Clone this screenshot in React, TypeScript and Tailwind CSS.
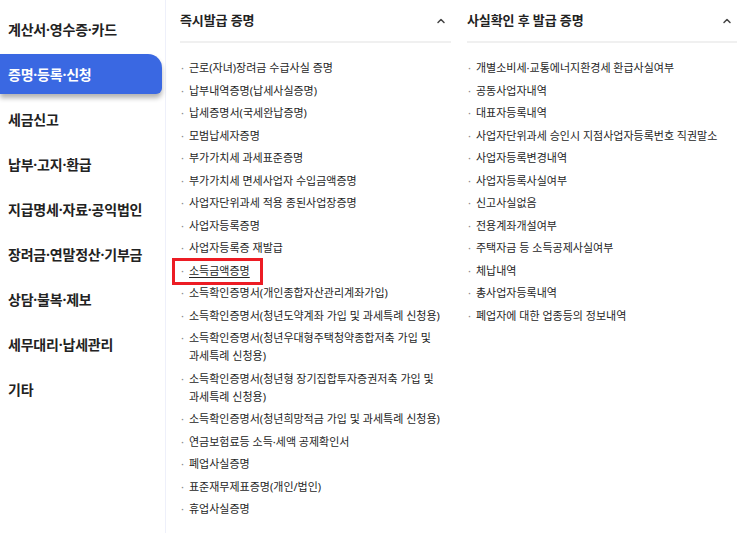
import { ChevronUp } from "lucide-react"

const menus = [
  "계산서·영수증·카드",
  "증명·등록·신청",
  "세금신고",
  "납부·고지·환급",
  "지급명세·자료·공익법인",
  "장려금·연말정산·기부금",
  "상담·불복·제보",
  "세무대리·납세관리",
  "기타"
]

const instant = [
  "근로(자녀)장려금 수급사실 증명",
  "납부내역증명(납세사실증명)",
  "납세증명서(국세완납증명)",
  "모범납세자증명",
  "부가가치세 과세표준증명",
  "부가가치세 면세사업자 수입금액증명",
  "사업자단위과세 적용 종된사업장증명",
  "사업자등록증명",
  "사업자등록증 재발급",
  "소득금액증명",
  "소득확인증명서(개인종합자산관리계좌가입)",
  "소득확인증명서(청년도약계좌 가입 및 과세특례 신청용)",
  "소득확인증명서(청년우대형주택청약종합저축 가입 및 과세특례 신청용)",
  "소득확인증명서(청년형 장기집합투자증권저축 가입 및 과세특례 신청용)",
  "소득확인증명서(청년희망적금 가입 및 과세특례 신청용)",
  "연금보험료등 소득·세액 공제확인서",
  "폐업사실증명",
  "표준재무제표증명(개인/법인)",
  "휴업사실증명"
]

const afterCheck = [
  "개별소비세·교통에너지환경세 환급사실여부",
  "공동사업자내역",
  "대표자등록내역",
  "사업자단위과세 승인시 지점사업자등록번호 직권말소",
  "사업자등록변경내역",
  "사업자등록사실여부",
  "신고사실없음",
  "전용계좌개설여부",
  "주택자금 등 소득공제사실여부",
  "체납내역",
  "총사업자등록내역",
  "폐업자에 대한 업종등의 정보내역"
]

function Section({ title, items, className }: { title: string; items: string[]; className: string }) {
  return (
    <section className={className}>
      <header className="flex h-[43px] items-center justify-between border-b-2 border-[#f0f0f0] pr-[4px] pt-[1px]">
        <h2 className="text-[13px] font-bold tracking-[-0.1px] text-[#222]">{title}</h2>
        <ChevronUp size={12} strokeWidth={3} className="text-[#444]" />
      </header>
      <ul className="flex flex-col gap-[4.5px] pt-[16px]">
        {items.map((item) => {
          const marked = item === "소득금액증명"
          return (
            <li key={item} className="relative flex break-keep text-[11px] leading-[18px] text-[#262626]">
              <span className="w-[9px] shrink-0 pl-[1px] text-[#888]">·</span>
              <span className={marked ? "underline underline-offset-2" : ""}>{item}</span>
              {marked && (
                <span className="absolute left-[-8px] top-[-4px] h-[27px] w-[91px] border-[3px] border-[#ec1c24]" />
              )}
            </li>
          )
        })}
      </ul>
    </section>
  )
}

export default function App() {
  return (
    <div
      className="flex h-[533px] w-[743px] overflow-hidden bg-white"
      style={{ fontFamily: '"Noto Sans", "Noto Sans CJK KR", sans-serif' }}
    >
      <nav className="flex w-[166px] shrink-0 flex-col gap-[5px] border-r border-[#eef0fa] pt-[9px] pr-[3px]">
        {menus.map((menu) => {
          const active = menu === "증명·등록·신청"
          return (
            <div
              key={menu}
              className={
                active
                  ? "flex h-10 items-center rounded-tr-[14px] rounded-br-[6px] bg-[#3a68e2] pl-2 text-[14px] font-bold tracking-[-0.2px] text-white shadow-[0_4px_5px_rgba(0,0,0,0.3)]"
                  : "flex h-10 items-center pl-2 text-[14px] font-bold tracking-[-0.2px] text-[#222]"
              }
            >
              {menu}
            </div>
          )
        })}
      </nav>
      <Section title="즉시발급 증명" items={instant} className="w-[290px] shrink-0 pl-[14px] pr-[5px]" />
      <Section title="사실확인 후 발급 증명" items={afterCheck} className="flex-1 pl-[11px] pr-[6px]" />
    </div>
  )
}
